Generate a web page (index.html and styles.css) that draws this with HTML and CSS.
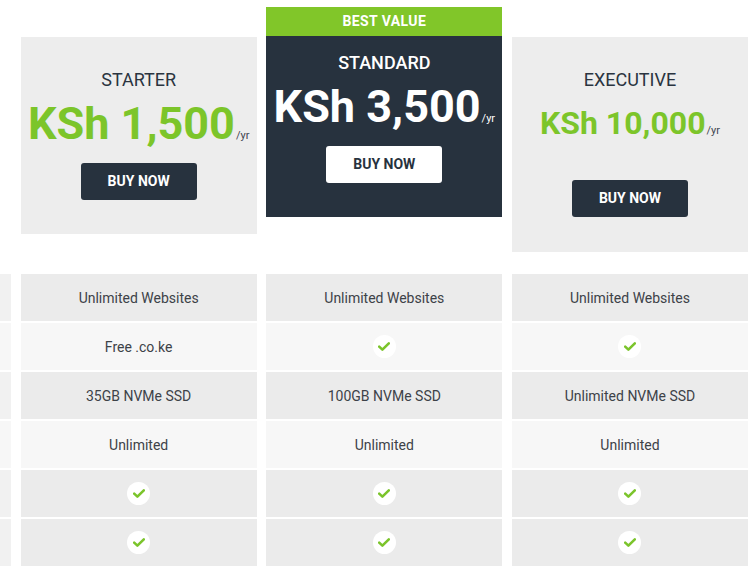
FILE: index.html
```html
<!DOCTYPE html>
<html>
<head>
<meta charset="utf-8">
<link rel="stylesheet" href="styles.css">
</head>
<body>
<div class="table">
  <div class="plans">
    <div class="plan-spacer"></div>
    <div class="card card-light">
      <div class="title">STARTER</div>
      <div class="price price-green">KSh 1,500<span class="per">/yr</span></div>
      <a class="btn btn-dark">BUY NOW</a>
    </div>
    <div class="featured">
      <div class="badge">BEST VALUE</div>
      <div class="card card-dark">
        <div class="title">STANDARD</div>
        <div class="price">KSh 3,500<span class="per">/yr</span></div>
        <a class="btn btn-white">BUY NOW</a>
      </div>
    </div>
    <div class="card card-light card-exec">
      <div class="title">EXECUTIVE</div>
      <div class="price price-green price-small">KSh 10,000<span class="per">/yr</span></div>
      <a class="btn btn-dark">BUY NOW</a>
    </div>
  </div>

  <div class="features">
    <div class="row row-grey">
      <div class="cell cell-label"></div>
      <div class="cell">Unlimited Websites</div>
      <div class="cell">Unlimited Websites</div>
      <div class="cell">Unlimited Websites</div>
    </div>
    <div class="row row-light">
      <div class="cell cell-label"></div>
      <div class="cell">Free .co.ke</div>
      <div class="cell"><span class="check"><svg viewBox="0 0 12 9" width="12" height="9"><path d="M1.2 4.6 L4.4 7.6 L10.8 1.4" fill="none" stroke="#7bc42b" stroke-width="2.6" stroke-linecap="round" stroke-linejoin="round"/></svg></span></div>
      <div class="cell"><span class="check"><svg viewBox="0 0 12 9" width="12" height="9"><path d="M1.2 4.6 L4.4 7.6 L10.8 1.4" fill="none" stroke="#7bc42b" stroke-width="2.6" stroke-linecap="round" stroke-linejoin="round"/></svg></span></div>
    </div>
    <div class="row row-grey">
      <div class="cell cell-label"></div>
      <div class="cell">35GB NVMe SSD</div>
      <div class="cell">100GB NVMe SSD</div>
      <div class="cell">Unlimited NVMe SSD</div>
    </div>
    <div class="row row-light">
      <div class="cell cell-label"></div>
      <div class="cell">Unlimited</div>
      <div class="cell">Unlimited</div>
      <div class="cell">Unlimited</div>
    </div>
    <div class="row row-grey">
      <div class="cell cell-label"></div>
      <div class="cell"><span class="check"><svg viewBox="0 0 12 9" width="12" height="9"><path d="M1.2 4.6 L4.4 7.6 L10.8 1.4" fill="none" stroke="#7bc42b" stroke-width="2.6" stroke-linecap="round" stroke-linejoin="round"/></svg></span></div>
      <div class="cell"><span class="check"><svg viewBox="0 0 12 9" width="12" height="9"><path d="M1.2 4.6 L4.4 7.6 L10.8 1.4" fill="none" stroke="#7bc42b" stroke-width="2.6" stroke-linecap="round" stroke-linejoin="round"/></svg></span></div>
      <div class="cell"><span class="check"><svg viewBox="0 0 12 9" width="12" height="9"><path d="M1.2 4.6 L4.4 7.6 L10.8 1.4" fill="none" stroke="#7bc42b" stroke-width="2.6" stroke-linecap="round" stroke-linejoin="round"/></svg></span></div>
    </div>
    <div class="row row-grey">
      <div class="cell cell-label"></div>
      <div class="cell"><span class="check"><svg viewBox="0 0 12 9" width="12" height="9"><path d="M1.2 4.6 L4.4 7.6 L10.8 1.4" fill="none" stroke="#7bc42b" stroke-width="2.6" stroke-linecap="round" stroke-linejoin="round"/></svg></span></div>
      <div class="cell"><span class="check"><svg viewBox="0 0 12 9" width="12" height="9"><path d="M1.2 4.6 L4.4 7.6 L10.8 1.4" fill="none" stroke="#7bc42b" stroke-width="2.6" stroke-linecap="round" stroke-linejoin="round"/></svg></span></div>
      <div class="cell"><span class="check"><svg viewBox="0 0 12 9" width="12" height="9"><path d="M1.2 4.6 L4.4 7.6 L10.8 1.4" fill="none" stroke="#7bc42b" stroke-width="2.6" stroke-linecap="round" stroke-linejoin="round"/></svg></span></div>
    </div>
  </div>
</div>
</body>
</html>
```

FILE: styles.css
```css
html, body {
  margin: 0;
  padding: 0;
  background: #ffffff;
  overflow: hidden;
}
body {
  font-family: Roboto, "Liberation Sans", sans-serif;
  color: #2a3440;
}
.table {
  width: 1000px;
  margin-left: -225px;
}
.plans {
  display: grid;
  grid-template-columns: 236px 236px 236px 236px;
  column-gap: 9.67px;
  align-items: start;
  height: 274px;
}
.card {
  text-align: center;
  box-sizing: border-box;
}
.card-light {
  background: #ededed;
  margin-top: 37px;
  padding: 32px 0 34px;
}
.card-exec {
  padding-bottom: 35px;
}
.featured {
  margin-top: 7px;
}
.badge {
  background: #81c629;
  color: #ffffff;
  font-weight: 700;
  font-size: 14px;
  letter-spacing: 0.4px;
  text-align: center;
  height: 29px;
  line-height: 29px;
}
.card-dark {
  background: #27323e;
  color: #ffffff;
  padding: 16px 0 34px;
}
.title {
  font-size: 18px;
  font-weight: 400;
  line-height: 22px;
}
.card-dark .title {
  font-weight: 500;
}
.price {
  font-size: 45px;
  font-weight: 700;
  line-height: 52px;
  margin-top: 7px;
  white-space: nowrap;
}
.price-green {
  color: #7cc52a;
}
.price-small {
  font-size: 32px;
  margin-top: 6px;
}
.per {
  font-size: 11px;
  line-height: 0;
  font-weight: 400;
  color: #3e4650;
  margin-left: 1px;
}
.card-dark .per {
  color: #ffffff;
}
.btn {
  display: block;
  width: 116px;
  height: 37px;
  line-height: 37px;
  margin: 13px auto 0;
  border-radius: 3px;
  font-size: 14px;
  font-weight: 700;
  text-align: center;
}
.card-exec .btn {
  margin-top: 31px;
}
.btn-dark {
  background: #27323e;
  color: #ffffff;
}
.btn-white {
  background: #ffffff;
  color: #27323e;
}
.features {
  display: flex;
  flex-direction: column;
  row-gap: 2px;
}
.row {
  display: grid;
  grid-template-columns: 236px 236px 236px 236px;
  column-gap: 9.67px;
  height: 47px;
}
.cell {
  display: flex;
  align-items: center;
  justify-content: center;
  font-size: 14px;
  color: #3d4248;
}
.row-grey .cell {
  background: #ebebeb;
}
.row-light .cell {
  background: #f7f7f7;
}
.row-grey .cell-label {
  background: #f1f1f1;
}
.row-light .cell-label {
  background: #f7f7f7;
}
.check {
  width: 23px;
  height: 23px;
  border-radius: 50%;
  background: #ffffff;
  display: flex;
  align-items: center;
  justify-content: center;
}
.check svg {
  display: block;
}
```
